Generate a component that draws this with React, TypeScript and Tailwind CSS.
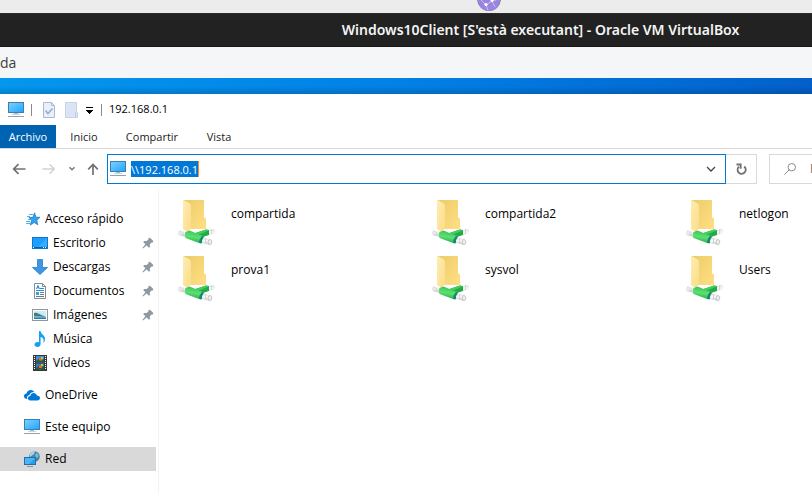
import React, { useId } from "react";

function Monitor({ className = "" }: { className?: string }) {
  const id = useId();
  return (
    <svg className={"h-4 w-4 shrink-0 " + className} viewBox="0 0 16 16" aria-hidden="true">
      <defs>
        <linearGradient id={id} x1="0" y1="0" x2="1" y2="1">
          <stop offset="0" stopColor="#7dd0ff" />
          <stop offset="0.5" stopColor="#4fbbff" />
          <stop offset="1" stopColor="#1fa2fb" />
        </linearGradient>
      </defs>
      <rect x="0.5" y="0.5" width="15" height="10" fill={`url(#${id})`} stroke="#3f7fae" />
      <rect x="6" y="11" width="4" height="1" fill="#a9bccb" />
      <rect x="4" y="12" width="8" height="1" fill="#c9d5de" />
      <rect x="0" y="14" width="16" height="1" fill="#8fa3b3" />
    </svg>
  );
}

function StarIcon() {
  return (
    <svg className="h-4 w-4 shrink-0" viewBox="0 0 16 16" aria-hidden="true">
      <path d="M9.6 1.800 10.900 6.200l4.100.1-3.200 3 1 4.500-3.600-2.300-4 2.600 1.400-4.600L4 6.500l3.900-.2z" fill="#2fa4ee" stroke="#1673b5" strokeWidth=".7" />
      <path d="M4 3.500h4M2 5.500h3M3 8.500h3M1 10.500h4M1 12.500h4" stroke="#52b3ef" />
    </svg>
  );
}

function DesktopIcon() {
  return (
    <svg className="h-4 w-4 shrink-0" viewBox="0 0 16 16" aria-hidden="true">
      <rect x="0.5" y="2.5" width="15" height="11" fill="#1a9fff" stroke="#0b78d0" />
      <path d="M15 3v8L6 12z" fill="#36aeff" />
      <path d="M1 12h14v1H1z" fill="#075fae" />
      <path d="M1 12h1v1H1zM11 12h1v1h-1zM13 12h1v1h-1z" fill="#fff" />
    </svg>
  );
}

function DownloadIcon() {
  return (
    <svg className="h-4 w-4 shrink-0" viewBox="0 0 16 16" aria-hidden="true">
      <path d="M5.5.5h5v8h5L8 15.6.5 8.5h5z" fill="#3f97e4" stroke="#2a7fcb" strokeWidth=".8" />
    </svg>
  );
}

function DocumentIcon() {
  return (
    <svg className="h-4 w-4 shrink-0" viewBox="0 0 16 16" aria-hidden="true">
      <path d="M2.5.5h8l3 3v12h-11z" fill="#fff" stroke="#858d92" />
      <path d="M10.5.5v3h3" fill="none" stroke="#858d92" />
      <path d="m4.400 6 1.600-3.600L7.500 6M5 4.800h2M8 5.500h4M4 7.500h8" fill="none" stroke="#238fd9" />
      <path d="M8 9.500h4M8 11.500h4M4 13.500h8" stroke="#6d7b83" />
      <path d="M4 9h3v3H4z" fill="#36a0e5" />
    </svg>
  );
}

function PictureIcon() {
  return (
    <svg className="h-4 w-4 shrink-0" viewBox="0 0 16 16" aria-hidden="true">
      <rect x=".5" y="2.500" width="15" height="11" fill="#fff" stroke="#8e979d" />
      <path d="M2 4h12v8H2z" fill="#cde9fa" />
      <path d="M2 6c3-1 6 2 12 4v2H2z" fill="#3f8070" />
      <path d="M2 10h12v2H2z" fill="#2f75b0" />
      <path d="M2 9c4 0 7 .4 12 1v.8H2z" fill="#77b8d8" />
    </svg>
  );
}

function MusicIcon() {
  return (
    <svg className="h-4 w-4 shrink-0" viewBox="0 0 16 16" aria-hidden="true">
      <path d="M7 0h1.500c.2 3 4.500 4 4.500 8 0 2-.9 3.500-1.700 4.200C12.500 8 10.500 6.500 8.600 6v7c0 2-1.400 3-3.200 3C3.700 16 2.500 15 2.500 13.600c0-2 2.500-3 4.500-2.300z" fill="#16a0f2" />
    </svg>
  );
}

function VideoIcon() {
  return (
    <svg className="h-4 w-4 shrink-0" viewBox="0 0 16 16" aria-hidden="true">
      <path d="M1 0h14v16H1z" fill="#34383b" />
      <path d="M4 1h8v6.500H4z" fill="#3f8ee0" />
      <path d="M4 8.500h8V15H4z" fill="#3579c2" />
      <path d="M4 6 7 4l2 1.500L12 4v3.500H4zM4 13l3-2 2 1.500 3-1.500v4H4z" fill="#2c5b37" />
      <path d="M7 3h3v2.500H7zM7 10.500h3V13H7z" fill="#dd6c2c" />
      <path d="M9 2h2v2H9zM9 9h2v2H9z" fill="#e7b52e" />
      <path d="M2.500 1v14M13.500 1v14" stroke="#fff" strokeDasharray="1 1" />
    </svg>
  );
}

function CloudIcon() {
  return (
    <svg className="h-4 w-4 shrink-0" viewBox="0 0 16 16" aria-hidden="true">
      <path d="M3.500 12C1 12 0 10.700 0 9.300 0 7.700 1.200 6.700 2.500 6.600 3 4.300 4.700 3 6.700 3c1.600 0 2.900.8 3.600 2C8 4.800 6 6 5.500 8 4 8.300 3 9.300 3 10.600c0 .5.200 1 .5 1.400z" fill="#0078d7" />
      <path d="M6.300 13.500C4.700 13.500 4 12.400 4 11.300 4 9.900 5 9 6.300 9c.3-2 1.700-3 3.300-3 1.700 0 2.900 1.100 3.300 2.600 1.800 0 3.100 1 3.100 2.500s-1.100 2.400-2.600 2.400z" fill="#0078d7" />
    </svg>
  );
}

function NetworkIcon() {
  return (
    <svg className="h-4 w-4 shrink-0" viewBox="0 0 16 16" aria-hidden="true">
      <circle cx="10.500" cy="5.500" r="5.300" fill="#4387aa" />
      <path d="M6 3c1-2 3-2.800 5-2.700L10 3 8 4.500 6 6z" fill="#a9d6e5" />
      <path d="m12 2 2 1 .7 2-1.700 2-2-2z" fill="#80bad1" />
      <rect x=".5" y="6.500" width="11" height="7" fill="#48b6fc" stroke="#286d9c" />
      <path d="M11 7v6H5z" fill="#269ff0" />
      <path d="M3 15.500h6" stroke="#8497a4" />
    </svg>
  );
}

function PinIcon() {
  return (
    <svg className="h-3 w-3 shrink-0" viewBox="0 0 12 12" aria-label="Anclado" role="img">
      <path d="M6.500 1 8 .8 11.300 4l-.3 1.500-1.500.1-1.700 1.900.1 2.500-1 .8-2.300-2.300L1 11.500l-.6-.5 3-3.700L1.200 5l.9-1 2.500.1L6.400 2.600z" fill="#8d9aa3" />
    </svg>
  );
}

function ShareFolder() {
  const id = useId();
  return (
    <svg className="h-12 w-10 shrink-0" viewBox="0 0 40 48" aria-hidden="true">
      <defs>
        <linearGradient id={id + "b"} x1="0" y1="0" x2="1" y2="1">
          <stop offset="0" stopColor="#edcb69" />
          <stop offset="1" stopColor="#ffdf83" />
        </linearGradient>
        <linearGradient id={id + "f"} x1="0" y1="0" x2="1" y2="1">
          <stop offset="0" stopColor="#ffedb2" />
          <stop offset="1" stopColor="#fbdc87" />
        </linearGradient>
        <linearGradient id={id + "g"} x1="0.6" y1="0" x2="0.4" y2="1">
          <stop offset="0.1" stopColor="#3fc75c" />
          <stop offset="0.5" stopColor="#5ce070" />
          <stop offset="1" stopColor="#1fa641" />
        </linearGradient>
        <linearGradient id={id + "p"} x1="0" y1="0" x2="0" y2="1">
          <stop offset="0" stopColor="#d9dbdb" />
          <stop offset="0.4" stopColor="#f8f8f8" />
          <stop offset="1" stopColor="#c8caca" />
        </linearGradient>
      </defs>
      <path d="M6 2h21v17l2 2v10H13V6z" fill={`url(#${id}b)`} />
      <path d="m6 2 8 5v24l-2 1v3l-6-4z" fill={`url(#${id}f)`} />
      <path d="m2 32.500 7 1.500v5l-6-1.500q-2-2-1-5zM31 32.500l5-1.500q3 1 2 4l-6 2z" fill={`url(#${id}p)`} />
      <path d="m17 35.500 12-4 3 .5v5l-9 3z" fill="#22ab45" />
      <path d="m17 35.500 12-4 3 .8-9 4z" fill="#43cd5f" />
      <path d="m8.500 34 4-1.500L26 38l-2.500 7.500L8.500 40q-1.500-3 0-6z" fill={`url(#${id}g)`} />
      <path d="m25 38 2 1-2.500 6.500-2.500-.7q0-4 3-6.800z" fill="#138579" />
      <path d="m26.500 39.500 7 1.500q2.500 3-.5 6l-8-2q-.5-3 1.500-5.500z" fill={`url(#${id}p)`} />
      <ellipse cx="33" cy="44" rx="1.800" ry="2.500" fill="#efefef" stroke="#b6b6b6" strokeWidth=".7" />
      <ellipse cx="3" cy="35" rx="1.300" ry="2.200" fill="#f2f2f2" stroke="#ccc" strokeWidth=".6" />
      <path d="M6 33.500v4.500M34.500 31.500V36M28.500 40.500v5" stroke="#c7c9c9" strokeWidth=".7" />
    </svg>
  );
}

const quickAccess = [
  { name: "Escritorio", icon: <DesktopIcon />, pinned: true },
  { name: "Descargas", icon: <DownloadIcon />, pinned: true },
  { name: "Documentos", icon: <DocumentIcon />, pinned: true },
  { name: "Imágenes", icon: <PictureIcon />, pinned: true },
  { name: "Música", icon: <MusicIcon />, pinned: false },
  { name: "Vídeos", icon: <VideoIcon />, pinned: false },
];

const roots = [
  { name: "OneDrive", icon: <CloudIcon />, active: false },
  { name: "Este equipo", icon: <Monitor />, active: false },
  { name: "Red", icon: <NetworkIcon />, active: true },
];

const shares = ["compartida", "compartida2", "netlogon", "prova1", "sysvol", "Users"];

export default function App() {
  return (
    <div className="flex min-h-screen flex-col overflow-hidden bg-white font-['Open_Sans','Noto_Sans',sans-serif] text-xs text-black">
      <div className="flex h-[13px] items-end justify-center overflow-hidden bg-[#ececec] pb-[2px] pl-[166px]">
        <svg className="h-6 w-6 shrink-0" viewBox="0 0 24 24" aria-hidden="true">
          <circle cx="12" cy="12" r="11.300" fill="#a898e8" stroke="#77738c" strokeWidth="1.200" />
          <path d="M1 13h22a11 11 0 0 1-22 0z" fill="#9b84df" />
          <path d="m3 12 6 6 6-4 7-2M9 18l2 5M15 14l3 6" fill="none" stroke="#cbbef5" />
          <circle cx="9" cy="17.500" r="1.600" fill="#fff" />
          <circle cx="15" cy="13.500" r="1.500" fill="#fff" />
        </svg>
      </div>

      <header className="flex h-[34px] items-center justify-center border-y border-t-[#2c2c2c] border-b-[#181818] bg-[#222222] pl-[269px]">
        <h1 className="whitespace-nowrap font-['Noto_Sans','Open_Sans',sans-serif] text-sm font-semibold text-[#f4f4f4]">
          Windows10Client [S&apos;està executant] - Oracle VM VirtualBox
        </h1>
      </header>

      <div className="flex h-[31px] items-center bg-[#f5f6f8] text-sm text-[#3d3d3d]">da</div>

      <div className="h-4 bg-linear-to-r from-[#0497ee] via-[#0280e6] to-[#0360cb]">
        <div className="h-full bg-linear-to-b from-transparent via-transparent to-black/15" />
      </div>

      <div className="flex h-[31px] items-center pl-2">
        <Monitor />
        <span className="ml-[7px] h-3 w-px bg-[#8a8a8a]" />
        <button aria-label="Propiedades" className="ml-[11px]">
          <svg className="h-4 w-3" viewBox="0 0 12 16" aria-hidden="true">
            <path d="M.5.5h8l3 3v12H.5z" fill="#eaf0fa" stroke="#a9b9d8" />
            <path d="M8.500.5v3h3" fill="none" stroke="#a9b9d8" />
            <path d="m2.500 8.500 2.500 3 4.500-5" fill="none" stroke="#9baace" strokeWidth="1.500" />
          </svg>
        </button>
        <button aria-label="Nueva carpeta" className="ml-[10px]">
          <svg className="h-4 w-[13px]" viewBox="0 0 13 16" aria-hidden="true">
            <path d="M.5.500h11v9l1 1v5H.5z" fill="#dbe4f4" stroke="#c6d2e8" />
            <path d="M10.500 15v-4.500l1-1" fill="none" stroke="#bdcae2" />
          </svg>
        </button>
        <button aria-label="Personalizar barra de acceso rápido" className="ml-2">
          <svg className="h-2 w-[7px]" viewBox="0 0 7 8" shapeRendering="crispEdges" aria-hidden="true">
            <path d="M0 1h7v1H0zM0 4h7v1H6v1H5v1H4v1H3V7H2V6H1V5H0z" />
          </svg>
        </button>
        <span className="ml-2 h-3 w-px bg-[#8a8a8a]" />
        <span className="ml-[7px] text-[11px]">192.168.0.1</span>
      </div>

      <nav className="flex h-6 border-b border-[#dadbdc] text-[11px]">
        <button className="w-14 bg-[#0063b1] pt-px text-white">Archivo</button>
        <button className="w-14 pt-px text-[#222]">Inicio</button>
        <button className="w-20 pt-px text-[#222]">Compartir</button>
        <button className="w-[54px] pt-px text-[#222]">Vista</button>
      </nav>

      <div className="flex h-10 items-center">
        <div className="flex w-[107px] shrink-0 items-center pl-3">
          <button aria-label="Atrás">
            <svg className="h-3 w-[14px]" viewBox="0 0 14 12" fill="none" stroke="#717171" strokeWidth="1.700" aria-hidden="true">
              <path d="M13.500 6H2M6.500 1.200 1.700 6l4.800 4.800" />
            </svg>
          </button>
          <button aria-label="Adelante" className="ml-4">
            <svg className="h-3 w-[14px]" viewBox="0 0 14 12" fill="none" stroke="#d2d2d2" strokeWidth="1.500" aria-hidden="true">
              <path d="M.5 6H12M7.500 1.200 12.300 6l-4.800 4.800" />
            </svg>
          </button>
          <button aria-label="Ubicaciones recientes" className="ml-3">
            <svg className="h-2 w-2" viewBox="0 0 8 8" fill="none" stroke="#777" strokeWidth="1.400" aria-hidden="true">
              <path d="m1.500 2.300 2.500 2.500 2.500-2.500" />
            </svg>
          </button>
          <button aria-label="Subir" className="ml-[11px]">
            <svg className="h-3 w-3" viewBox="0 0 12 12" fill="none" stroke="#717171" strokeWidth="1.700" aria-hidden="true">
              <path d="M6 12V1.500M1.200 6.300 6 1.500l4.800 4.800" />
            </svg>
          </button>
        </div>
        <label className="flex h-[30px] flex-1 items-center border border-[#0078d7] pl-[2px]">
          <Monitor />
          <input
            aria-label="Dirección"
            defaultValue={"\\\\192.168.0.1"}
            className="ml-[5px] field-sizing-content h-4 border-r border-[#ff8728] bg-[#0078d7] text-[11px] text-white outline-none"
          />
          <svg className="mr-[9px] ml-auto h-2 w-[10px]" viewBox="0 0 10 8" fill="none" stroke="#444" strokeWidth="1.300" aria-hidden="true">
            <path d="m1 2 4 4 4-4" />
          </svg>
        </label>
        <button aria-label="Actualizar" className="flex h-[30px] w-[31px] items-center justify-center border border-l-0 border-[#d9d9d9]">
          <svg className="h-3 w-3" viewBox="0 0 12 12" fill="none" stroke="#717171" strokeWidth="1.800" aria-hidden="true">
            <path d="M4 3.600A4.100 4.100 0 1 0 9.200 3.500M1.500 1.500h4.200v4.200" />
          </svg>
        </button>
        <label className="ml-3 flex h-[30px] w-[43px] items-center overflow-hidden border border-r-0 border-[#d9d9d9] pl-[14px]">
          <svg className="h-3 w-3 shrink-0" viewBox="0 0 12 12" fill="none" stroke="#8b8b8b" aria-hidden="true">
            <circle cx="7.800" cy="4.200" r="3.700" />
            <path d="M5.200 6.800.4 11.600" />
          </svg>
          <input aria-label="Buscar" placeholder="Buscar en 192.168.0.1" className="ml-[14px] w-40 shrink-0 text-xs outline-none placeholder:text-[#6d6d6d]" />
        </label>
      </div>

      <div className="flex flex-1">
        <aside className="w-[159px] shrink-0 border-r border-[#f3f3f3] pt-[18px] pr-[2px]">
          <a href="#rapido" className="flex h-6 items-center gap-1 pl-[25px]">
            <StarIcon />
            Acceso rápido
          </a>
          <ul>
            {quickAccess.map((q) => (
              <li key={q.name}>
                <a href="#carpeta" className="flex h-6 items-center gap-[5px] pr-[2px] pl-8">
                  {q.icon}
                  <span className="flex-1">{q.name}</span>
                  {q.pinned && <PinIcon />}
                </a>
              </li>
            ))}
          </ul>
          <ul className="mt-2 flex flex-col gap-2">
            {roots.map((r) => (
              <li key={r.name}>
                <a href="#raiz" className={r.active ? "flex h-6 items-center gap-[5px] bg-[#d9d9d9] pl-6" : "flex h-6 items-center gap-[5px] pl-6"}>
                  {r.icon}
                  {r.name}
                </a>
              </li>
            ))}
          </ul>
        </aside>
        <main className="min-w-0 flex-1 overflow-hidden pt-[9px] pl-[18px]">
          <ul className="grid grid-cols-[repeat(3,254px)] gap-y-2">
            {shares.map((s) => (
              <li key={s}>
                <a href="#recurso" className="flex h-12 gap-[14px]">
                  <ShareFolder />
                  <span className="pt-1 leading-6">{s}</span>
                </a>
              </li>
            ))}
          </ul>
        </main>
      </div>
    </div>
  );
}
